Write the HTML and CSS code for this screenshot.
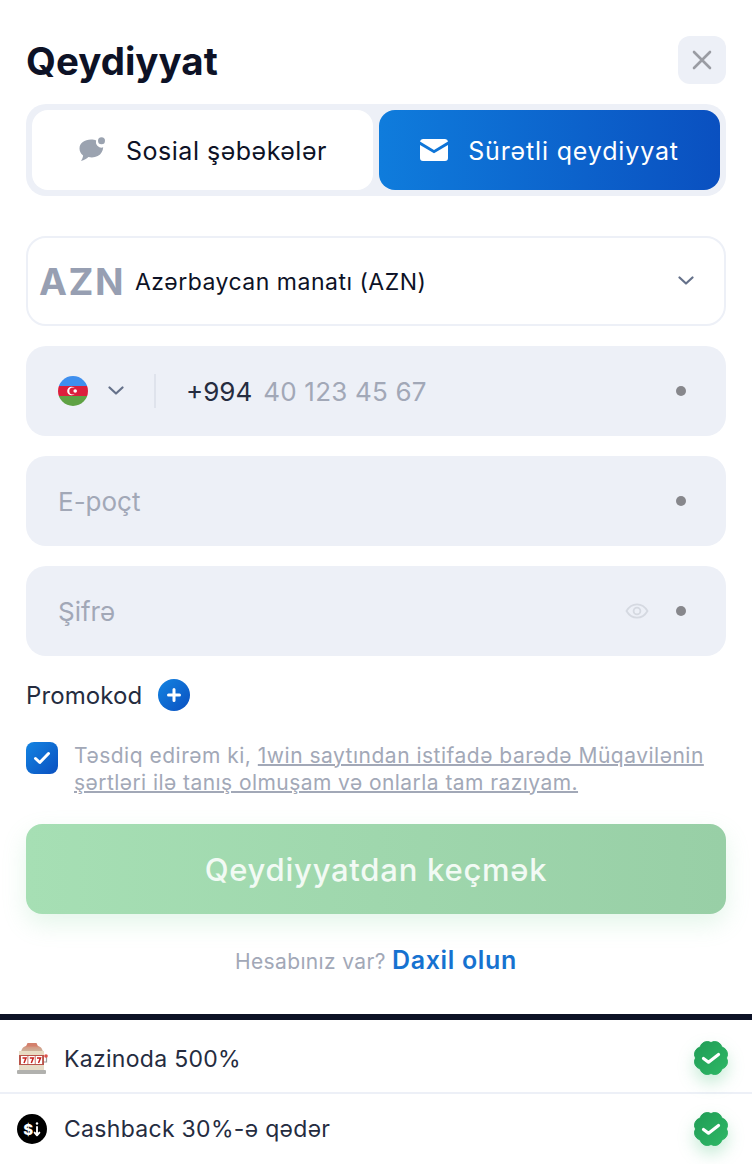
FILE: index.html
```html
<!DOCTYPE html>
<html lang="en">
<head>
  <meta charset="UTF-8" />
  <meta name="viewport" content="width=device-width, initial-scale=1.0"/>
  <title>Qeydiyyat</title>
  <link rel="stylesheet" href="styles.css">
</head>
<body>
  <svg class="defs" width="0" height="0">
    <defs>
      <linearGradient id="blue" x1="0" y1="0" x2="1" y2="1">
        <stop offset="0" stop-color="#1384e2"/>
        <stop offset="1" stop-color="#0a50c0"/>
      </linearGradient>
      <linearGradient id="green" x1="0" y1="0" x2="1" y2="1">
        <stop offset="0" stop-color="#1f9c55"/>
        <stop offset="1" stop-color="#2fb866"/>
      </linearGradient>
      <linearGradient id="dome" x1="0" y1="0" x2="0" y2="1">
        <stop offset="0" stop-color="#d98d78"/>
        <stop offset="1" stop-color="#c9b8a0"/>
      </linearGradient>
      <clipPath id="flagClip"><circle cx="15" cy="15" r="15"/></clipPath>
      <g id="badgeShape">
        <path d="M18 2.500A7.500 7.500 0 0 1 28.960 7.040A7.500 7.500 0 0 1 33.500 18A7.500 7.500 0 0 1 28.960 28.960A7.500 7.500 0 0 1 18 33.500A7.500 7.500 0 0 1 7.040 28.960A7.500 7.500 0 0 1 2.500 18A7.500 7.500 0 0 1 7.040 7.040A7.500 7.500 0 0 1 18 2.500z" fill="url(#green)" stroke="url(#green)" stroke-width="1" stroke-linejoin="round"/>
        <path d="M10.500 18.500l5 3.700 10-7.700" stroke="#fff" stroke-width="3.200" stroke-linecap="round" stroke-linejoin="round" fill="none"/>
      </g>
    </defs>
  </svg>

  <main class="form-panel">
    <header class="head">
      <h1>Qeydiyyat</h1>
      <button class="close" type="button" aria-label="close">
        <svg width="20" height="20" viewBox="0 0 20 20"><path d="M2 2l16 16M18 2L2 18" stroke="#9a9ca3" stroke-width="2.600" stroke-linecap="round" fill="none"/></svg>
      </button>
    </header>

    <div class="tabs">
      <div class="tab">
        <svg width="28" height="26" viewBox="0 0 28 26"><path d="M13 2.500c2.200 0 3.800.3 5.200 1a5.500 5.500 0 0 0 7 6.800c-.3 3.600-1.900 7-5.500 8.800-2.900 1.500-6.400 1.700-9.300.9-1.700 1.500-4.100 3.200-7.400 3.900 1-1.500 1.900-3.400 2.100-5.500C2.700 16.700 1.500 14.200 1.500 11.500 1.500 6 6.600 2.500 13 2.500z" fill="#9ba3b0"/><circle cx="23.500" cy="3.800" r="3.500" fill="#9ba3b0"/></svg>
        <span>Sosial şəbəkələr</span>
      </div>
      <div class="tab active">
        <svg width="28" height="22" viewBox="0 0 28 22"><path d="M3 0h22a3 3 0 0 1 3 2.600L14 11 0 2.600A3 3 0 0 1 3 0z" fill="#fff"/><path d="M0 6l14 8.300L28 6v13a3 3 0 0 1-3 3H3a3 3 0 0 1-3-3z" fill="#fff"/></svg>
        <span>Sürətli qeydiyyat</span>
      </div>
    </div>

    <div class="field select">
      <span class="code">AZN</span>
      <span class="select-name">Azərbaycan manatı (AZN)</span>
      <svg class="chev" width="16" height="10" viewBox="0 0 16 10"><path d="M1.500 1.500L8 7.500l6.500-6" stroke="#65718a" stroke-width="2.200" stroke-linecap="round" stroke-linejoin="round" fill="none"/></svg>
    </div>

    <div class="field input phone">
      <svg class="flag" width="30" height="30" viewBox="0 0 30 30">
        <g clip-path="url(#flagClip)">
          <rect width="30" height="10" fill="#3f8fee"/>
          <rect y="10" width="30" height="10" fill="#dc1f3c"/>
          <rect y="20" width="30" height="10" fill="#5fa244"/>
          <circle cx="13.500" cy="15" r="4.300" fill="#fff"/>
          <circle cx="14.800" cy="15" r="3.500" fill="#dc1f3c"/>
          <circle cx="17.200" cy="15" r="1.800" fill="#fff"/>
        </g>
      </svg>
      <svg class="chev small" width="16" height="10" viewBox="0 0 16 10"><path d="M1.500 1.500L8 7.500l6.500-6" stroke="#65718a" stroke-width="2.200" stroke-linecap="round" stroke-linejoin="round" fill="none"/></svg>
      <span class="sep"></span>
      <span class="dial">+994</span>
      <span class="hint wide">40 123 45 67</span>
      <span class="dot"></span>
    </div>

    <div class="field input">
      <span class="hint">E-poçt</span>
      <span class="dot"></span>
    </div>

    <div class="field input">
      <span class="hint">Şifrə</span>
      <svg class="eye" width="24" height="16" viewBox="0 0 24 16"><path d="M1.500 8C4 3.700 7.700 1.300 12 1.300S20 3.700 22.500 8C20 12.300 16.300 14.700 12 14.700S4 12.300 1.500 8z" stroke="#d5d9e1" stroke-width="1.800" fill="none"/><circle cx="12" cy="8" r="3.400" stroke="#d5d9e1" stroke-width="1.800" fill="none"/></svg>
      <span class="dot"></span>
    </div>

    <div class="promo">
      <span>Promokod</span>
      <svg width="32" height="32" viewBox="0 0 32 32"><circle cx="16" cy="16" r="16" fill="url(#blue)"/><path d="M16 10.500v11M10.500 16h11" stroke="#fff" stroke-width="3" stroke-linecap="round"/></svg>
    </div>

    <div class="terms">
      <span class="check">
        <svg width="18" height="14" viewBox="0 0 18 14"><path d="M2.500 7.500l4.300 4L15.500 2.500" stroke="#fff" stroke-width="3" stroke-linecap="round" stroke-linejoin="round" fill="none"/></svg>
      </span>
      <p>Təsdiq edirəm ki, <a href="#">1win saytından istifadə barədə Müqavilənin</a> <a href="#">şərtləri ilə tanış olmuşam və onlarla tam razıyam.</a></p>
    </div>

    <button class="submit" type="button">Qeydiyyatdan keçmək</button>

    <p class="login">Hesabınız var? <a href="#">Daxil olun</a></p>
  </main>

  <section class="bonuses">
    <div class="bonus">
      <svg class="bonus-icon" width="32" height="34" viewBox="0 1 32 34">
        <path d="M5 11C6 6 9 4 16 4s10 2 11 7z" fill="url(#dome)"/>
        <path d="M11.500 2h9l1.500 3.500H10z" fill="#d4806c"/>
        <rect x="3" y="10" width="25" height="4" fill="#e8dcc4"/>
        <rect x="3" y="14" width="25" height="10" fill="#b9544a"/>
        <rect x="5" y="15" width="6.500" height="8" fill="#fff"/>
        <rect x="12.300" y="15" width="6.500" height="8" fill="#fff"/>
        <rect x="19.600" y="15" width="6.500" height="8" fill="#fff"/>
        <path d="M6.500 17h3.500l-2 5M13.800 17h3.500l-2 5M21 17h3.500l-2 5" stroke="#c8231f" stroke-width="1.500" fill="none"/>
        <rect x="3" y="24" width="25" height="5" fill="#e6dcc8"/>
        <rect x="1" y="29" width="29" height="4" rx="1" fill="#b1b1ae"/>
        <path d="M28 21h2.500v-5" stroke="#9a9a98" stroke-width="1.200" fill="none"/>
        <circle cx="30" cy="15" r="1.800" fill="#e0524a"/>
      </svg>
      <span>Kazinoda 500%</span>
      <svg class="badge first" width="36" height="36" viewBox="0 0 36 36"><use href="#badgeShape"/></svg>
    </div>
    <div class="bonus">
      <svg class="bonus-icon" width="32" height="30" viewBox="0 0 30 30">
        <circle cx="15" cy="15" r="15" fill="#000"/>
        <text x="11.300" y="20.500" class="dollar">$</text>
        <circle cx="20" cy="9.500" r="1.200" fill="#fff"/>
        <path d="M20 13v8M17.600 18.600l2.400 2.700 2.400-2.700" stroke="#fff" stroke-width="1.900" stroke-linecap="round" stroke-linejoin="round" fill="none"/>
      </svg>
      <span>Cashback 30%-ə qədər</span>
      <svg class="badge" width="36" height="36" viewBox="0 0 36 36"><use href="#badgeShape"/></svg>
    </div>
  </section>
</body>
</html>
```

FILE: styles.css
```css
* {
  box-sizing: border-box;
}

body {
  margin: 0;
  width: 752px;
  height: 1164px;
  overflow: hidden;
  background: #fff;
  font-family: Inter, "Noto Sans", sans-serif;
  color: #0d1226;
}

.defs {
  display: block;
  height: 0;
}

.form-panel {
  height: 1014px;
  padding: 36px 26px 0;
}

.head {
  display: flex;
  justify-content: space-between;
  align-items: center;
  height: 48px;
  margin-bottom: 20px;
}

h1 {
  margin: 0;
  padding-top: 1px;
  font-size: 38.5px;
  line-height: 48px;
  font-weight: 700;
  color: #0d1226;
}

.close {
  display: flex;
  align-items: center;
  justify-content: center;
  width: 48px;
  height: 48px;
  padding: 0;
  border: 0;
  border-radius: 12px;
  background: #edf0f7;
}

.tabs {
  display: flex;
  gap: 6px;
  height: 92px;
  padding: 6px;
  margin-bottom: 40px;
  border-radius: 20px;
  background: #edf0f7;
}

.tab {
  flex: 1;
  display: flex;
  align-items: center;
  justify-content: center;
  gap: 20px;
  border-radius: 16px;
  background: #fff;
  font-size: 25px;
  letter-spacing: 0.5px;
  color: #0d1226;
}

.tab span {
  padding-top: 2px;
}

.tab.active {
  background: linear-gradient(90deg, #0f7cdc 0%, #0a50c0 100%);
  letter-spacing: 0.85px;
  color: #fff;
}

.field {
  display: flex;
  align-items: center;
  height: 90px;
  margin-bottom: 20px;
  border-radius: 20px;
}

.select {
  padding: 2px 30px 0 11px;
  border: 2px solid #edf0f7;
}

.code {
  margin-top: -2px;
  margin-right: 10px;
  font-size: 37.5px;
  font-weight: 700;
  letter-spacing: 1.5px;
  color: #979fb2;
}

.select-name {
  flex: 1;
  font-size: 23px;
  letter-spacing: 0.5px;
  color: #0d1226;
}

.chev {
  margin-top: -2px;
}

.chev.small {
  margin: 0 0 0 20px;
}

.input {
  padding: 0 40px 0 32px;
  background: #edf0f7;
  font-size: 26px;
}

.hint {
  flex: 1;
  color: #a2a8b7;
}

.hint.wide {
  letter-spacing: 0.2px;
}

.dial {
  color: #252c3f;
  margin-right: 11px;
}

.flag {
  flex: none;
}

.sep {
  width: 2px;
  height: 34px;
  margin: 0 30px;
  background: #dfe3ec;
}

.dot {
  flex: none;
  width: 10px;
  height: 10px;
  border-radius: 50%;
  background: #87878c;
}

.eye {
  margin-right: 27px;
}

.promo {
  display: flex;
  align-items: center;
  gap: 16px;
  height: 32px;
  margin-top: 23px;
  margin-bottom: 31px;
  font-size: 24px;
  letter-spacing: 0.1px;
  color: #252c3f;
}

.terms {
  display: flex;
  gap: 16px;
  margin-bottom: 28px;
}

.check {
  flex: none;
  display: flex;
  align-items: center;
  justify-content: center;
  width: 32px;
  height: 32px;
  border-radius: 8px;
  background: linear-gradient(135deg, #1384e2, #0a50c0);
}

.terms p {
  margin: 0;
  font-size: 21px;
  line-height: 27px;
  letter-spacing: 0.5px;
  color: #a2a8b7;
}

.terms a {
  color: #a2a8b7;
  text-decoration: underline;
  text-decoration-thickness: 1.5px;
}

.terms a + a {
  letter-spacing: 0.44px;
}

.submit {
  display: block;
  width: 100%;
  height: 90px;
  border: 0;
  border-radius: 16px;
  background: linear-gradient(90deg, #a6dfb4, #98cfa6);
  box-shadow: 0 10px 24px rgba(120, 210, 150, 0.2);
  font-family: inherit;
  font-size: 31px;
  font-weight: 500;
  letter-spacing: 0.75px;
  color: #f2faf4;
}

.login {
  margin: 30px 0 0;
  text-align: center;
  font-size: 21px;
  line-height: 32px;
  letter-spacing: 0.35px;
  color: #a2a8b7;
}

.login a {
  font-size: 25px;
  font-weight: 600;
  letter-spacing: 0.65px;
  color: #1672d0;
  text-decoration: none;
}

.bonuses {
  border-top: 6px solid #0d1226;
}

.bonus {
  display: flex;
  align-items: center;
  height: 72px;
  padding: 5px 23px 0 16px;
  font-size: 23px;
  letter-spacing: 0.3px;
  color: #252c3f;
}

.bonus + .bonus {
  padding: 0 23px 1px 16px;
  border-top: 2px solid #edf0f7;
}

.bonus span {
  flex: 1;
}

.bonus-icon {
  margin-right: 16px;
}

.badge {
  overflow: visible;
  filter: drop-shadow(0 8px 8px rgba(40, 180, 100, 0.25));
}

.badge.first {
  margin-top: -2px;
}

.dollar {
  font-family: Inter, sans-serif;
  font-size: 15px;
  font-weight: 800;
  fill: #fff;
  text-anchor: middle;
}
```
